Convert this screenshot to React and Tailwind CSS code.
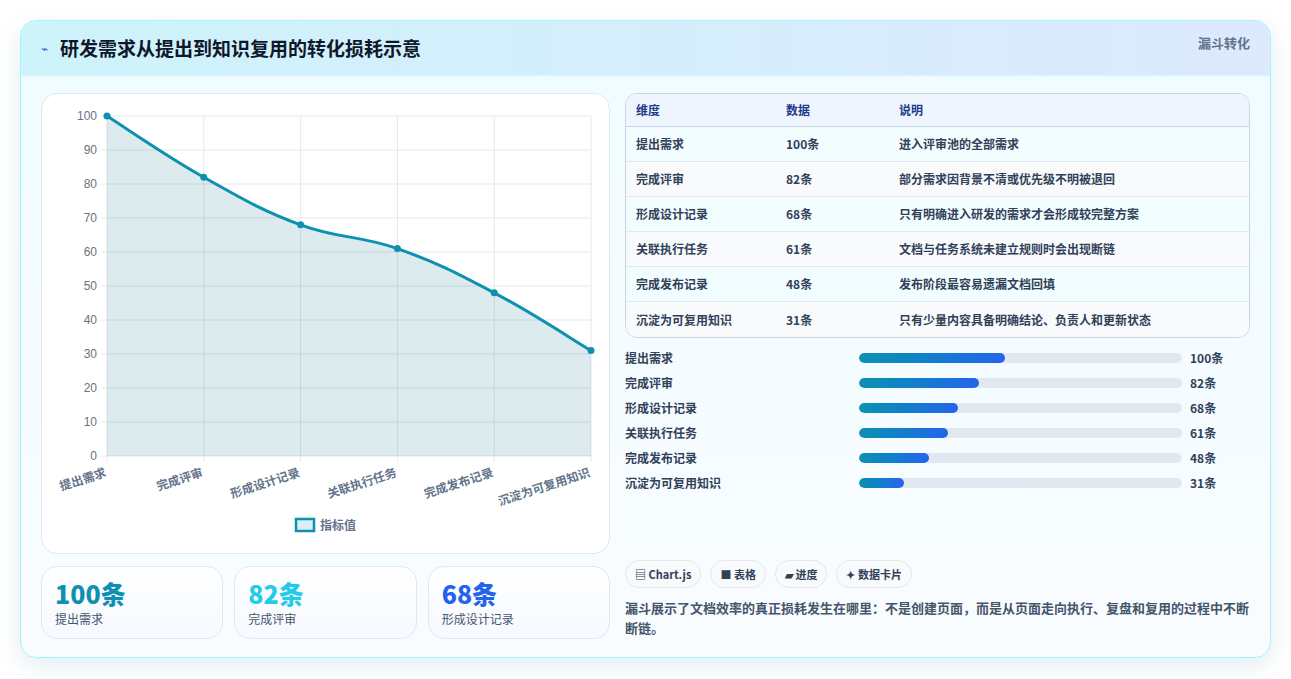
const rows = [
  ['提出需求', 100, '进入评审池的全部需求'],
  ['完成评审', 82, '部分需求因背景不清或优先级不明被退回'],
  ['形成设计记录', 68, '只有明确进入研发的需求才会形成较完整方案'],
  ['关联执行任务', 61, '文档与任务系统未建立规则时会出现断链'],
  ['完成发布记录', 48, '发布阶段最容易遗漏文档回填'],
  ['沉淀为可复用知识', 31, '只有少量内容具备明确结论、负责人和更新状态'],
]

const font = { fontFamily: '"Noto Sans CJK SC", "Noto Sans", sans-serif' }

function Chart() {
  // plot area in svg coords (card origin at 40,93)
  const x0 = 65, x1 = 549, yTop = 22, yBot = 362
  const xs = rows.map((_, i) => x0 + (i * (x1 - x0)) / 5)
  const ys = rows.map(r => yBot - r[1] * 3.4)
  const pts = xs.map((x, i) => [x, ys[i]])
  let d = `M${pts[0][0]},${pts[0][1]}`
  for (let i = 0; i < pts.length - 1; i++) {
    const p0 = pts[i - 1] || pts[i], p1 = pts[i], p2 = pts[i + 1], p3 = pts[i + 2] || p2
    const t = 0.2
    d += ` C${p1[0] + (p2[0] - p0[0]) * t},${p1[1] + (p2[1] - p0[1]) * t} ${p2[0] - (p3[0] - p1[0]) * t},${p2[1] - (p3[1] - p1[1]) * t} ${p2[0]},${p2[1]}`
  }
  const area = `${d} L${x1},${yBot} L${x0},${yBot} Z`
  return (
    <svg width="566" height="458" style={font}>
      {[0, 10, 20, 30, 40, 50, 60, 70, 80, 90, 100].map(v => {
        const y = yBot - v * 3.4
        return (
          <g key={v}>
            <line x1={x0 - 6} x2={x1} y1={y} y2={y} stroke="#e5e7eb" />
            <text x={x0 - 10} y={y + 4} textAnchor="end" fontSize="12" fill="#6b7280" fontFamily="Liberation Sans, sans-serif">{v}</text>
          </g>
        )
      })}
      {xs.map((x, i) => (
        <line key={i} x1={x} x2={x} y1={yTop} y2={yBot + 6} stroke="#e5e7eb" />
      ))}
      <path d={area} fill="rgba(14,116,144,0.14)" />
      <path d={d} fill="none" stroke="#0e91b0" strokeWidth="3" />
      {pts.map(([x, y], i) => (
        <circle key={i} cx={x} cy={y} r="3.5" fill="#0e91b0" />
      ))}
      {rows.map((r, i) => (
        <text key={i} x={xs[i]} y={yBot + 20} textAnchor="end" fontSize="12" fontWeight="600" fill="#64748b" transform={`rotate(-18 ${xs[i]} ${yBot + 20})`}>{r[0]}</text>
      ))}
      <rect x="254" y="425" width="18" height="12" fill="#dbeef5" stroke="#0e91b0" strokeWidth="2.5" />
      <text x="278" y="436" fontSize="12" fill="#64748b" fontWeight="600">指标值</text>
    </svg>
  )
}

export default function App() {
  return (
    <div className="w-[1291px] h-[679px] bg-white pt-5 px-5" style={font}>
      <div className="rounded-2xl border border-cyan-200 bg-gradient-to-b from-[#effcff] to-[#f9fcff] shadow-[0_8px_24px_rgba(14,116,144,0.12)] overflow-hidden h-[638px]">
        <div className="h-[55px] bg-gradient-to-r from-[#cdf3fb] to-[#dde9fd] flex items-center justify-between px-5 border-b border-cyan-100">
          <div className="flex items-center gap-3">
            <span className="text-[#2563eb] text-xs">⌁</span>
            <span className="text-[19px] font-bold text-[#0f172a]">研发需求从提出到知识复用的转化损耗示意</span>
          </div>
          <span className="text-[13px] font-semibold text-slate-500 self-start mt-3">漏斗转化</span>
        </div>
        <div className="flex gap-[15px] px-5 pt-[17px]">
          <div className="w-[569px] flex flex-col gap-[12px]">
            <div className="h-[461px] bg-white rounded-2xl border border-slate-200">
              <Chart />
            </div>
            <div className="grid grid-cols-3 gap-[11px]">
              {[['100条', '提出需求', 'text-[#0e91b0]'], ['82条', '完成评审', 'text-[#22cce6]'], ['68条', '形成设计记录', 'text-[#2563eb]']].map(([v, l, c]) => (
                <div key={l} className="h-[73px] rounded-2xl border border-slate-200 bg-gradient-to-b from-white to-[#f6f9ff] px-[13px] pt-[10px]">
                  <div className={`text-[25px] font-extrabold leading-[32px] ${c}`}>{v}</div>
                  <div className="text-xs text-slate-600 mt-[2px]">{l}</div>
                </div>
              ))}
            </div>
          </div>
          <div className="flex-1 flex flex-col">
            <div className="rounded-xl border border-slate-300 overflow-hidden bg-white">
              <div className="flex h-[33px] items-center bg-[#eef5ff] border-b border-slate-300 text-xs font-bold text-[#1e3a8a]">
                <div className="w-[160px] pl-[10px]">维度</div>
                <div className="w-[113px]">数据</div>
                <div>说明</div>
              </div>
              {rows.map((r, i) => (
                <div key={i} className={`flex h-[35px] items-center text-xs font-semibold text-slate-700 ${i < 5 ? 'border-b border-slate-200' : ''} ${i % 2 ? 'bg-[#f8fafc]' : 'bg-[#f2fdff]'}`}>
                  <div className="w-[160px] pl-[10px]">{r[0]}</div>
                  <div className="w-[113px]">{r[1]}条</div>
                  <div>{r[2]}</div>
                </div>
              ))}
            </div>
            <div className="flex flex-col gap-[7px] mt-[11px]">
              {rows.map((r, i) => (
                <div key={i} className="flex items-center h-[18px] text-xs font-semibold text-slate-700">
                  <div className="w-[234px]">{r[0]}</div>
                  <div className="w-[323px] h-[10px] rounded-full bg-[#e2e8f0] overflow-hidden">
                    <div className="h-full rounded-full bg-gradient-to-r from-[#0e91b0] to-[#2563eb]" style={{ width: `${r[1] * 1.46}px` }} />
                  </div>
                  <div className="ml-2">{r[1]}条</div>
                </div>
              ))}
            </div>
            <div className="flex gap-[9px] mt-[68px]">
              {['▤ Chart.js', '■ 表格', '▰ 进度', '✦ 数据卡片'].map(t => (
                <span key={t} className="h-[28px] px-[9px] rounded-full border border-slate-200 bg-[#f8fafc] text-[11px] font-semibold text-slate-700 flex items-center">{t}</span>
              ))}
            </div>
            <p className="mt-[10px] text-[13px] leading-[20px] font-semibold text-slate-600">漏斗展示了文档效率的真正损耗发生在哪里：不是创建页面，而是从页面走向执行、复盘和复用的过程中不断断链。</p>
          </div>
        </div>
      </div>
    </div>
  )
}
